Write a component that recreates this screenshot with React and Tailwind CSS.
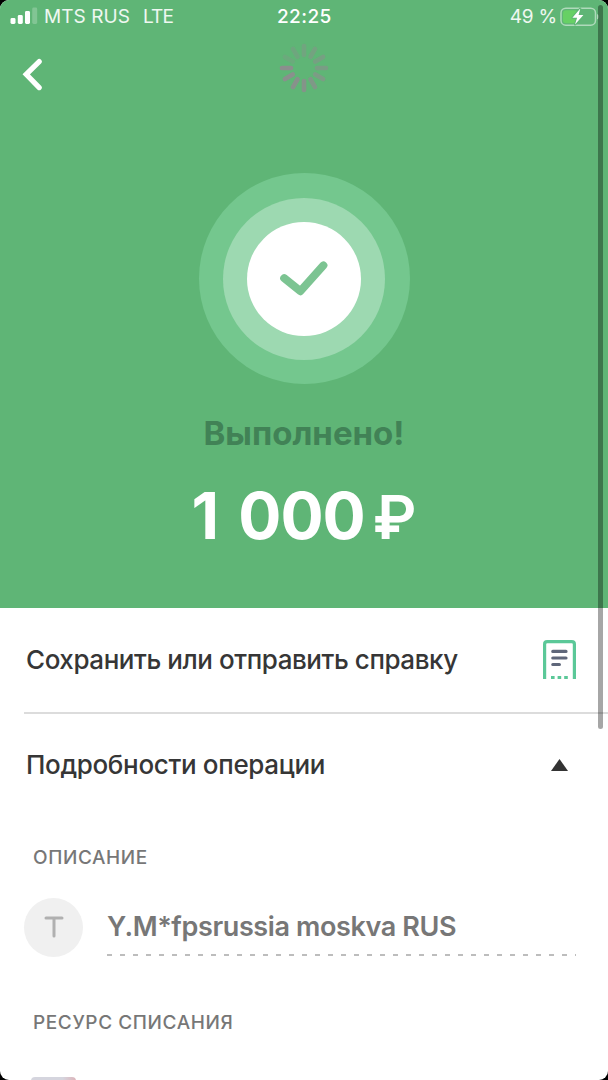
/**
 * Operation receipt screen: success hero on top, operation details below.
 */
import React from 'react';

// Spinner blades, clockwise from the top; the most opaque one is at nine o'clock
const BLADES = [0.42, 0.48, 0.54, 0.6, 0.66, 0.74, 0.84, 0.92, 0.97, 1, 0.28, 0.36];

function SignalIcon() {
  return (
    <svg width="28" height="18" viewBox="0 0 28 18" fill="#fff" className="shrink-0">
      <rect x="0.5" y="11" width="5" height="6" rx="1.4" />
      <rect x="7.8" y="8" width="5" height="9" rx="1.4" />
      <rect x="15" y="4" width="5" height="13" rx="1.4" />
      <rect x="22.2" y="0.5" width="5" height="16.5" rx="1.4" opacity="0.22" />
    </svg>
  );
}

function BatteryIcon() {
  return (
    <svg width="40" height="20" viewBox="0 0 40 20" className="shrink-0">
      <rect x="1" y="1.2" width="34.5" height="17" rx="4.8" fill="none" stroke="#fff" strokeOpacity="0.5" strokeWidth="1.5" />
      <path d="M37 7 C39.2 7.6 39.2 11.8 37 12.4 Z" fill="#fff" fillOpacity="0.5" />
      <rect x="3" y="3.2" width="14.5" height="13" rx="3" fill="#67d065" />
      <path
        d="M20.3 1.4 L12.4 10.8 H17.1 L15 17.6 L23.4 8.1 H18.6 Z"
        fill="#fff"
        stroke="#5fb576"
        strokeWidth="2"
        strokeLinejoin="round"
        paintOrder="stroke"
      />
    </svg>
  );
}

function Spinner() {
  return (
    <svg width="50" height="50" viewBox="-25 -25 50 50">
      {BLADES.map((opacity, i) => (
        <line
          key={i}
          x1="0"
          y1="-13"
          x2="0"
          y2="-22"
          stroke="#8b8e8d"
          strokeWidth="4.6"
          strokeLinecap="round"
          strokeOpacity={opacity}
          transform={`rotate(${i * 30})`}
        />
      ))}
    </svg>
  );
}

function SuccessBadge() {
  return (
    <div className="flex h-[211px] w-[211px] items-center justify-center rounded-full bg-[#74c78e]">
      <div className="flex h-[162px] w-[162px] items-center justify-center rounded-full bg-[#9dd9b1]">
        <div className="flex h-[114px] w-[114px] items-center justify-center rounded-full bg-white">
          <svg width="48" height="36" viewBox="0 0 48 36" fill="none">
            <path d="M4.2 17.2 L20.4 30.2 L43.4 4.4" stroke="#7cc492" strokeWidth="8" strokeLinecap="round" strokeLinejoin="round" />
          </svg>
        </div>
      </div>
    </div>
  );
}

function ReceiptIcon() {
  return (
    <svg width="33" height="40" viewBox="0 0 33 40" fill="none">
      <path d="M1.6 39 V4.2 Q1.6 1.6 4.2 1.6 H28.8 Q31.4 1.6 31.4 4.2 V39" stroke="#5bc898" strokeWidth="3.2" />
      <path d="M9.8 11.4 H23 M9.8 18 H23 M9.8 24.5 H16.4" stroke="#5f677a" strokeWidth="3.2" strokeLinecap="round" />
      <path d="M8 37.5 H25" stroke="#5bc898" strokeWidth="3" strokeDasharray="3.6 3" />
    </svg>
  );
}

function StatusBar() {
  return (
    <div className="flex h-[33px] items-center text-[19px] leading-none text-white/90">
      <div className="flex w-[277px] items-center pl-[10px]">
        <div className="-mt-px">
          <SignalIcon />
        </div>
        <span className="ml-[6px] tracking-[0.05px]">MTS RUS</span>
        <span className="ml-[13px] tracking-[-0.8px]">LTE</span>
      </div>
      <span className="font-medium tracking-[0.4px] text-white">22:25</span>
      <div className="ml-auto flex items-center pr-[8px]">
        <span className="mr-[3px] tracking-[-0.2px]">49 %</span>
        <BatteryIcon />
      </div>
    </div>
  );
}

function Hero() {
  return (
    <section className="flex h-[608px] flex-col bg-[#5fb576]">
      <StatusBar />
      <div className="grid h-[70px] grid-cols-3 items-center">
        <svg width="22" height="34" viewBox="0 0 22 34" fill="none" className="ml-[21px] mt-[12px]">
          <path d="M18.2 4.6 L5.2 17.4 L18.2 30.6" stroke="#fff" strokeWidth="5.2" strokeLinecap="round" strokeLinejoin="miter" />
        </svg>
        <div className="justify-self-center">
          <Spinner />
        </div>
      </div>
      <div className="mt-[70px] flex flex-col items-center">
        <SuccessBadge />
        <h1 className="mt-[28px] text-[33px] leading-[42px] font-bold text-[#418256]">Выполнено!</h1>
        <div className="mt-[27px] flex items-baseline leading-[70px] text-white">
          <span className="text-[64px] font-bold tracking-[-1px] [word-spacing:6px]">1 000</span>
          <span className="ml-[8px] text-[60px] font-semibold">₽</span>
        </div>
      </div>
    </section>
  );
}

function SectionLabel({ children }) {
  return <h3 className="pl-[33px] text-[19px] leading-6 font-medium tracking-[0.6px] text-[#777]">{children}</h3>;
}

export default function App() {
  return (
    <div className="h-[1080px] w-[608px] overflow-hidden bg-black">
      <main className="relative h-full overflow-hidden rounded-[9px] bg-white font-['Inter','Noto_Sans',sans-serif]">
        <Hero />

        <div className="flex h-[104px] items-center justify-between pr-8 pl-[26px]">
          <span className="pb-0.5 text-[26px] font-medium tracking-[-0.43px] text-[#363636]">
            Сохранить или отправить справку
          </span>
          <ReceiptIcon />
        </div>
        <div className="ml-6 h-[1.5px] bg-[#dcdcdc]" />
        <div className="flex h-[103px] items-center justify-between pr-10 pl-[26px]">
          <span className="pb-px text-[26px] font-medium tracking-[-0.33px] text-[#363636]">Подробности операции</span>
          <svg width="17" height="12" viewBox="0 0 17 12" fill="#333">
            <path d="M8.5 0 L17 12 H0 Z" />
          </svg>
        </div>

        <div className="pt-[29px]">
          <SectionLabel>ОПИСАНИЕ</SectionLabel>
          <div className="mt-[28px] flex h-[59px] pl-6">
            <div className="flex h-[59px] w-[59px] items-center justify-center rounded-full bg-[#f0f0f0]">
              <svg width="20" height="22" viewBox="0 0 20 22" fill="none" stroke="#b0b0b0" strokeWidth="3" strokeLinecap="round">
                <path d="M2 2 H18 M10 2 V20" />
              </svg>
            </div>
            <div className="ml-[24px] flex w-[469px] flex-col">
              <span className="h-[56px] text-[27px] leading-[57px] font-semibold tracking-[-0.38px] text-[#777]">
                Y.M*fpsrussia moskva RUS
              </span>
              <svg width="469" height="2">
                <line x1="0" y1="1" x2="469" y2="1" stroke="#bdbdbd" strokeWidth="1.8" strokeDasharray="5 8" />
              </svg>
            </div>
          </div>
        </div>

        <div className="pt-[54px]">
          <SectionLabel>РЕСУРС СПИСАНИЯ</SectionLabel>
          <div className="mt-[42px] ml-[31px] h-[30px] w-[45px] rounded-[4px] bg-linear-to-r from-[#d5d5de] from-70% to-[#dcb4ba]" />
        </div>

        {/* Scroll indicator */}
        <div className="absolute top-[5px] left-[598px] h-[724px] w-[5px] rounded-full bg-black/35" />
      </main>
    </div>
  );
}
